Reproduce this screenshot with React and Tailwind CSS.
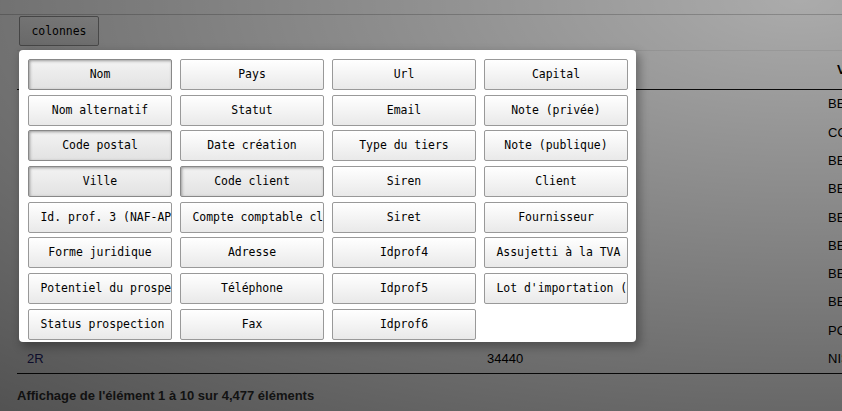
const BTN_BASE =
  "block h-[31px] w-[144px] overflow-hidden whitespace-nowrap rounded-[2px] border px-[11.4px] text-center leading-[29px] text-black";
const BTN_OFF =
  "border-[#999] bg-[linear-gradient(to_bottom,#ffffff_0%,#e9e9e9_100%)]";
const BTN_ON =
  "border-[#888] bg-[linear-gradient(to_bottom,#f3f3f3_0%,#e2e2e2_100%)] shadow-[inset_1px_1px_3px_#999]";

// Column toggles, row by row, as the collection shows them.
const COLUMNS = [
  { label: "Nom", on: true },
  { label: "Pays" },
  { label: "Url" },
  { label: "Capital" },
  { label: "Nom alternatif" },
  { label: "Statut" },
  { label: "Email" },
  { label: "Note (privée)" },
  { label: "Code postal", on: true },
  { label: "Date création" },
  { label: "Type du tiers" },
  { label: "Note (publique)" },
  { label: "Ville", on: true },
  { label: "Code client", on: true },
  { label: "Siren" },
  { label: "Client" },
  { label: "Id. prof. 3 (NAF-APE)" },
  { label: "Compte comptable client" },
  { label: "Siret" },
  { label: "Fournisseur" },
  { label: "Forme juridique" },
  { label: "Adresse" },
  { label: "Idprof4" },
  { label: "Assujetti à la TVA" },
  { label: "Potentiel du prospect" },
  { label: "Téléphone" },
  { label: "Idprof5" },
  { label: "Lot d'importation (import_key)" },
  { label: "Status prospection" },
  { label: "Fax" },
  { label: "Idprof6" },
];

const ROWS = [
  { nom: "", cp: "", ville: "BEZIERS" },
  { nom: "", cp: "", ville: "COLOMBIERS" },
  { nom: "", cp: "", ville: "BEZIERS" },
  { nom: "", cp: "", ville: "BEZIERS" },
  { nom: "", cp: "", ville: "BEZIERS" },
  { nom: "", cp: "", ville: "BEZIERS" },
  { nom: "", cp: "", ville: "BEZIERS" },
  { nom: "", cp: "", ville: "BEZIERS" },
  { nom: "", cp: "", ville: "PORTIRAGNES" },
  { nom: "2R", cp: "34440", ville: "NISSAN-LEZ-ENSERUNE" },
];

function ColvisButton({ label, on }) {
  return (
    <button type="button" className={`${BTN_BASE} ${on ? BTN_ON : BTN_OFF}`}>
      {label}
    </button>
  );
}

export default function App() {
  return (
    <div className="relative h-[411px] w-[842px] overflow-hidden bg-white font-['Liberation_Sans',Arial,sans-serif] text-[13px] text-black">
      <div className="h-[15px] border-b border-[#cccccc]" />

      <div className="pl-[19px] pt-[1px] font-['DejaVu_Sans_Mono',monospace] text-[11.44px]">
        <button
          type="button"
          className={`block h-[30px] rounded-[2px] border px-[11.4px] leading-[28px] text-black ${BTN_OFF}`}
        >
          colonnes
        </button>
      </div>

      <div className="mt-[4px] w-[1100px] pl-[17px]">
        <div className="flex h-[40px] items-center border-t border-b border-t-[#eeeeee] border-b-[#111111] font-bold">
          <div className="w-[460px] pl-[18px]">Nom</div>
          <div className="w-[341px] pl-[18px]">Code postal</div>
          <div className="pl-[19px]">Ville</div>
        </div>
        {ROWS.map((r, i) => (
          <div key={i} className="flex h-[28.3px] items-center">
            <div className="w-[460px] pl-[10px] text-[#26267a]">{r.nom}</div>
            <div className="w-[341px] pl-[10px]">{r.cp}</div>
            <div className="pl-[10px]">{r.ville}</div>
          </div>
        ))}
        <div className="border-t border-[#111111]" />
        <div className="pt-[12px] font-bold text-[#333333]">
          Affichage de l'élément 1 à 10 sur 4,477 éléments
        </div>
      </div>

      {/* dimmed backdrop behind the open collection */}
      <div className="absolute inset-0 bg-[radial-gradient(1390px_610px_at_800px_0px,rgba(0,0,0,0.33)_0%,rgba(0,0,0,0.72)_100%)]" />

      <div className="absolute left-[19px] top-[50px] w-[617px] rounded-[4px] bg-white pb-[2px] pl-[9px] pr-[8px] pt-[9px] font-['DejaVu_Sans_Mono',monospace] text-[11.44px] shadow-[3px_4px_10px_1px_rgba(0,0,0,0.3)]">
        <div className="grid grid-cols-[repeat(4,144px)] gap-x-[8px] gap-y-[4.7px]">
          {COLUMNS.map((c) => (
            <ColvisButton key={c.label} label={c.label} on={c.on} />
          ))}
        </div>
      </div>
    </div>
  );
}
